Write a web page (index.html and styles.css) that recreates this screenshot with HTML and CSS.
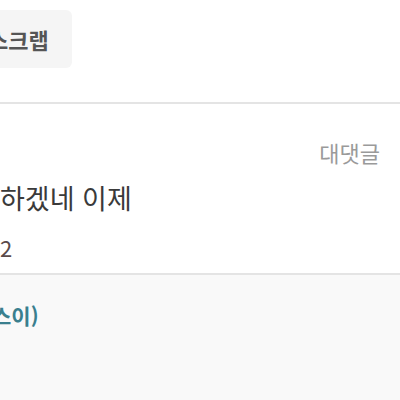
FILE: index.html
```html
<!DOCTYPE html>
<html lang="ko">
<head>
    <meta charset="UTF-8">
    <meta name="viewport" content="width=device-width, initial-scale=1.0">
    <title>댓글</title>
    <link rel="stylesheet" href="styles.css">
</head>
<body>
    <div class="page">
        <div class="actions">
            <button class="scrap">스크랩</button>
        </div>

        <div class="comment">
            <div class="comment-head">
                <span class="reply-link">대댓글</span>
            </div>
            <p class="comment-text">하겠네 이제</p>
            <div class="comment-meta">2</div>
        </div>

        <div class="reply">
            <div class="reply-author">스이)</div>
            <p class="reply-text">ㅋㅋ</p>
        </div>
    </div>
</body>
</html>
```

FILE: styles.css
```css
body {
    margin: 0;
    font-family: "Noto Sans CJK KR", "Noto Sans", sans-serif;
    background-color: #ffffff;
    overflow: hidden;
}
.actions {
    padding-top: 10px;
}
.scrap {
    display: inline-flex;
    align-items: center;
    height: 58px;
    margin-left: -20px;
    padding: 0 23px 0 8px;
    border: none;
    border-radius: 6px;
    background-color: #f5f5f5;
    color: #555555;
    font-family: inherit;
    font-size: 22px;
    font-weight: 700;
}
.comment {
    margin-top: 34px;
    padding: 33px 20px 11px 0;
    border-top: 2px solid #e4e4e4;
    border-bottom: 2px solid #e4e4e4;
}
.comment-head {
    display: flex;
    justify-content: flex-end;
    line-height: 30px;
}
.reply-link {
    color: #9a9a9a;
    font-size: 22px;
}
.comment-text {
    margin: 13px 0 0;
    color: #3a3a3a;
    font-size: 27px;
    line-height: 36px;
}
.comment-meta {
    margin-top: 16px;
    color: #5a4a4a;
    font-size: 22px;
    line-height: 30px;
}
.reply {
    background-color: #f9f9f9;
    padding: 25px 20px 40px 0;
}
.reply-author {
    margin-left: -8px;
    color: #3a7f8e;
    font-size: 21px;
    font-weight: 700;
    line-height: 30px;
}
.reply-text {
    margin: 60px 0 0;
    color: #333333;
    font-size: 24px;
    line-height: 30px;
}
```
